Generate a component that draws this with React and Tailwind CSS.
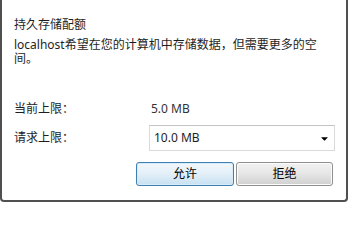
import { FaCaretDown } from 'react-icons/fa'

const font = "font-['Noto_Sans','Noto_Sans_CJK_SC',sans-serif]"

export default function App() {
   return (
      <div className={`w-[350px] h-[204px] bg-white ${font} text-[12px] leading-[14px] text-[#1e1e1e]`}>
         <div className="w-[348px] h-[202px] border-x-2 border-b-2 border-[#505050] rounded-b-[4px] pl-3 pr-3 pt-[18px]">
            <h1 className="font-normal">持久存储配额</h1>
            <p className="mt-[6px] w-[320px]">
               localhost希望在您的计算机中存储数据，但需要更多的空间。
            </p>

            <div className="mt-[36px] grid grid-cols-[135px_1fr] items-center">
               <span>当前上限：</span>
               <span className="pl-[2px] text-[#333]">5.0 MB</span>
            </div>

            <div className="mt-[9px] grid grid-cols-[135px_186px] items-center">
               <span>请求上限：</span>
               <div className="h-[26px] flex items-center justify-between border border-[#dadada] border-t-[#c4c4c4] bg-white pl-[4px] pr-[4px]">
                  <span>10.0 MB</span>
                  <FaCaretDown className="text-[11px] text-black" />
               </div>
            </div>

            <div className="mt-[11px] flex justify-end gap-[2px] pr-[1px]">
               <button className="w-[98px] h-[24px] rounded-[3px] border border-[#3c7fb1] bg-gradient-to-b from-[#f2f8fc] via-[#e3eff8] to-[#c6e0f1] shadow-[inset_0_0_0_1px_#d6ecf8] text-[12px] text-black">
                  允许
               </button>
               <button className="w-[97px] h-[24px] rounded-[3px] border border-[#8e8f8f] bg-gradient-to-b from-[#f2f2f2] via-[#e6e6e6] to-[#cfcfcf] shadow-[inset_0_0_0_1px_#fcfcfc] text-[12px] text-black">
                  拒绝
               </button>
            </div>
         </div>
      </div>
   )
}
